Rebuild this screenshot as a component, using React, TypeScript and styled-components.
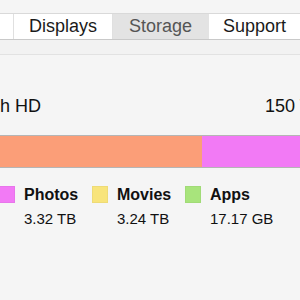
import styled, { createGlobalStyle } from 'styled-components';

interface Tab {
  label: string;
  width: number;
  selected?: boolean;
}

interface Usage {
  name: string;
  size: string;
  color: string;
  value: number;
}

const tabs: Tab[] = [
  { label: 'General', width: 121 },
  { label: 'Displays', width: 99 },
  { label: 'Storage', width: 96, selected: true },
  { label: 'Support', width: 91 },
];

const usage: Usage[] = [
  { name: 'Audio', size: '4.82 TB', color: '#fb9e78', value: 4.82 },
  { name: 'Photos', size: '3.32 TB', color: '#f27af5', value: 3.32 },
  { name: 'Movies', size: '3.24 TB', color: '#f8e47b', value: 3.24 },
  { name: 'Apps', size: '17.17 GB', color: '#a8e47c', value: 0.017 },
];

const total = usage.reduce((sum, u) => sum + u.value, 0);

export default function App() {
  return (
    <>
      <GlobalStyle />
      <Window>
        <Toolbar>
          <TabBar>
            {tabs.map((tab) => (
              <TabButton key={tab.label} $width={tab.width} $selected={!!tab.selected}>
                {tab.label}
              </TabButton>
            ))}
          </TabBar>
          <Band />
        </Toolbar>

        <Panel>
          <DiskRow>
            <DiskName>Macintosh HD</DiskName>
            <Capacity>150 TB</Capacity>
          </DiskRow>

          <Bar>
            {usage.map((u) => (
              <Segment key={u.name} $color={u.color} style={{ width: `${(u.value / total) * 100}%` }} />
            ))}
          </Bar>

          <Legend>
            {usage.map((u) => (
              <LegendItem key={u.name}>
                <Swatch $color={u.color} />
                <LegendText>
                  <LegendName>{u.name}</LegendName>
                  <LegendSize>{u.size}</LegendSize>
                </LegendText>
              </LegendItem>
            ))}
          </Legend>
        </Panel>
      </Window>
    </>
  );
}

// Styles
const GlobalStyle = createGlobalStyle`
  *, *::before, *::after {
    box-sizing: border-box;
  }
  body {
    margin: 0;
    background: #f5f5f5;
    font-family: 'Liberation Sans', Arial, sans-serif;
    color: #111;
  }
`;

const Window = styled.div`
  width: 300px;
  height: 300px;
  overflow: hidden;
  background: #f5f5f5;
`;

const Toolbar = styled.div`
  padding-top: 13px;
`;

const TabBar = styled.div`
  display: flex;
  height: 27px;
  margin-left: -107px;
  background: #fff;
  border-top: 1px solid #d9d9d9;
  border-bottom: 1px solid #c9c9c9;
`;

const TabButton = styled.div<{ $width: number; $selected: boolean }>`
  flex: 0 0 ${(p) => p.$width}px;
  height: 100%;
  font-size: 18px;
  line-height: 25px;
  text-align: center;
  white-space: nowrap;
  overflow: hidden;
  border-right: 1px solid ${(p) => (p.$selected ? '#e3e3e3' : '#e0e0e0')};
  background: ${(p) => (p.$selected ? '#e3e3e3' : '#fff')};
  color: ${(p) => (p.$selected ? '#555' : '#1a1a1a')};
  &:last-child {
    border-right: none;
  }
`;

const Band = styled.div`
  height: 15px;
  background: #f2f2f2;
  border-bottom: 1px solid #e2e2e2;
`;

const Panel = styled.div`
  margin-left: -94px;
  width: 700px;
  padding-top: 40px;
`;

const DiskRow = styled.div`
  display: flex;
  gap: 224px;
  padding-left: 22px;
  font-size: 18px;
  line-height: 22px;
  white-space: nowrap;
`;

const DiskName = styled.span`
  color: #111;
`;

const Capacity = styled.span`
  color: #111;
`;

const Bar = styled.div`
  display: flex;
  height: 33px;
  margin-top: 18px;
  border-top: 1px solid #b5b5b5;
  border-bottom: 1px solid #b5b5b5;
`;

const Segment = styled.div<{ $color: string }>`
  height: 100%;
  background: ${(p) => p.$color};
`;

const Legend = styled.div`
  display: grid;
  grid-template-columns: repeat(4, 93px);
  margin-top: 18px;
`;

const LegendItem = styled.div`
  display: flex;
  align-items: flex-start;
  gap: 9px;
`;

const Swatch = styled.div<{ $color: string }>`
  flex: 0 0 16px;
  height: 17px;
  background: ${(p) => p.$color};
  border: 1px solid rgba(0, 0, 0, 0.04);
`;

const LegendText = styled.div`
  display: flex;
  flex-direction: column;
  gap: 6px;
  white-space: nowrap;
`;

const LegendName = styled.span`
  font-size: 16px;
  font-weight: 700;
  line-height: 18px;
  color: #111;
`;

const LegendSize = styled.span`
  font-size: 15px;
  line-height: 18px;
  color: #111;
`;
